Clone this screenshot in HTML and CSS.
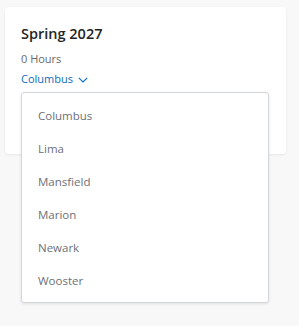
FILE: index.html
```html
<!DOCTYPE html>
<html>
<head>
<meta charset="utf-8">
<link rel="stylesheet" href="styles.css">
</head>
<body>
<div class="card">
  <h2 class="title">Spring 2027</h2>
  <div class="hours">0 Hours</div>
  <div class="campus">
    <button class="campus-toggle">Columbus
      <svg class="chev" width="10" height="6" viewBox="0 0 10 6"><path d="M0.8 0.8 L5 5 L9.2 0.8" fill="none" stroke="#0a6ebd" stroke-width="1.1"/></svg>
    </button>
    <ul class="menu">
      <li>Columbus</li>
      <li>Lima</li>
      <li>Mansfield</li>
      <li>Marion</li>
      <li>Newark</li>
      <li>Wooster</li>
    </ul>
  </div>
</div>
</body>
</html>
```
FILE: styles.css
```css
html, body { margin: 0; padding: 0; }
body {
  background: #f8f8f8;
  font-family: "Open Sans", "Noto Sans", sans-serif;
  width: 299px;
  height: 326px;
  overflow: hidden;
}
.card {
  margin: 7px 0 0 5px;
  width: 281px;
  height: 147px;
  box-sizing: border-box;
  background: #fff;
  border-radius: 4px;
  box-shadow: 0 1px 3px rgba(0,0,0,0.07);
  padding: 17px 16px 0 16px;
}
.title {
  margin: 0;
  font-size: 14.5px;
  font-weight: 600;
  line-height: 20px;
  color: #242424;
}
.hours {
  margin-top: 7px;
  font-size: 11px;
  line-height: 15px;
  color: #6a6a6a;
}
.campus { position: relative; margin-top: 5px; }
.campus-toggle {
  border: 0;
  background: none;
  padding: 0;
  font-family: inherit;
  font-size: 11px;
  line-height: 16px;
  color: #0a6ebd;
  display: flex;
  align-items: center;
  gap: 5px;
}
.chev { margin-top: 1px; }
.menu {
  position: absolute;
  left: 0;
  top: 21px;
  width: 248px;
  box-sizing: border-box;
  margin: 0;
  padding: 6px 0 5px 0;
  list-style: none;
  background: #fff;
  border: 1px solid #d3d6db;
  border-radius: 3px;
  box-shadow: 0 1px 3px rgba(0,0,0,0.1);
}
.menu li {
  height: 33px;
  line-height: 33px;
  padding-left: 16px;
  font-size: 11.5px;
  color: #6d7078;
}
```
